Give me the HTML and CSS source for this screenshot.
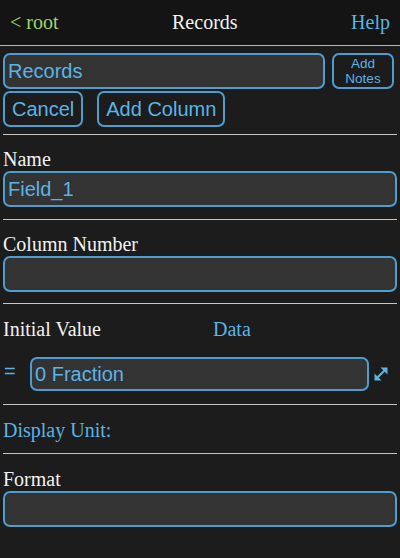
FILE: index.html
```html
<!DOCTYPE html>
<html>
<head>
<meta charset="utf-8">
<link rel="stylesheet" href="styles.css">
</head>
<body>
<header class="topbar">
  <span class="back">&lt; root</span>
  <span class="title">Records</span>
  <span class="help">Help</span>
</header>
<main class="content">
  <div class="row1">
    <div class="field grow">Records</div>
    <button class="notes">Add<br>Notes</button>
  </div>
  <div class="row2">
    <button class="btn">Cancel</button>
    <button class="btn">Add Column</button>
  </div>
  <div class="sep s1"></div>
  <div class="label l-name">Name</div>
  <div class="field">Field_1</div>
  <div class="sep s2"></div>
  <div class="label l-col">Column Number</div>
  <div class="field"></div>
  <div class="sep s3"></div>
  <div class="iv-row">
    <span class="label">Initial Value</span>
    <span class="data">Data</span>
  </div>
  <div class="value-row">
    <span class="eq">=</span>
    <div class="field small grow">0 Fraction</div>
    <svg class="expand" width="16" height="16" viewBox="0 0 16 16">
      <line x1="4" y1="12" x2="12" y2="4" stroke="#5ab4e6" stroke-width="2.2"/>
      <polygon points="7.5,1.5 14.5,1.5 14.5,8.5" fill="#5ab4e6"/>
      <polygon points="1.5,7.5 1.5,14.5 8.5,14.5" fill="#5ab4e6"/>
    </svg>
  </div>
  <div class="sep s4"></div>
  <div class="unit">Display Unit:</div>
  <div class="sep s5"></div>
  <div class="label l-format">Format</div>
  <div class="field"></div>
</main>
</body>
</html>
```
FILE: styles.css
```css
html, body {
  margin: 0;
  padding: 0;
  background: #1c1c1c;
  height: 100%;
}
body {
  font-family: "Liberation Serif", "Times New Roman", serif;
  color: #f2f2f2;
}
.topbar {
  height: 45px;
  background: #141414;
  border-bottom: 1px solid #b8b8b8;
  display: flex;
  align-items: center;
  justify-content: space-between;
  padding: 0 10px 0 10px;
  font-size: 20px;
  box-sizing: content-box;
}
.back { color: #a0d468; }
.title { color: #f2f2f2; }
.help { color: #5ab4e6; }
.content {
  padding: 7px 3px 0 3px;
}
.field {
  box-sizing: border-box;
  height: 36px;
  border: 2px solid #4d9ecf;
  border-radius: 7px;
  background: #333333;
  color: #5ab4e6;
  font-family: "Liberation Sans", Arial, sans-serif;
  font-size: 20px;
  line-height: 32px;
  padding: 0 3px;
}
.grow { flex: 1; }
.row1 {
  display: flex;
  gap: 7px;
}
.notes, .btn {
  box-sizing: border-box;
  height: 36px;
  border: 2px solid #4d9ecf;
  border-radius: 7px;
  background: #1c1c1c;
  color: #5ab4e6;
  font-family: "Liberation Sans", Arial, sans-serif;
  padding: 0;
}
.notes {
  width: 62px;
  font-size: 13.5px;
  line-height: 15px;
  margin-right: 3px;
}
.row2 {
  display: flex;
  gap: 14px;
  margin-top: 2px;
}
.btn {
  font-size: 20px;
  padding: 0 7px;
}
.sep {
  height: 1px;
  background: #c4c4c4;
}
.s1 { margin-top: 7px; }
.label {
  font-size: 20px;
  line-height: 23px;
}
.l-name { margin-top: 13px; }
.s2 { margin-top: 12px; }
.l-col { margin-top: 13px; }
.s3 { margin-top: 11px; }
.iv-row {
  display: flex;
  margin-top: 14px;
  font-size: 20px;
  line-height: 23px;
}
.iv-row .label { width: 210px; }
.data { color: #5ab4e6; }
.value-row {
  display: flex;
  align-items: center;
  margin-top: 16px;
}
.eq {
  color: #5ab4e6;
  font-family: "Liberation Sans", Arial, sans-serif;
  font-size: 20px;
  width: 26px;
  padding-left: 1px;
  margin-top: -6px;
}
.field.small {
  height: 34px;
  line-height: 30px;
}
.expand {
  margin: 0 8px 0 4px;
}
.s4 { margin-top: 13px; }
.unit {
  margin-top: 14px;
  font-size: 20px;
  line-height: 23px;
  color: #5ab4e6;
}
.s5 { margin-top: 11px; }
.l-format { margin-top: 14px; }
```
